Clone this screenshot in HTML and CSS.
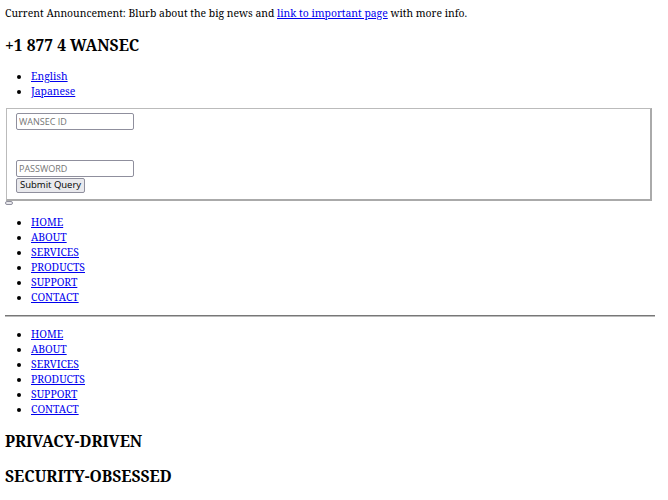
FILE: index.html
```html
<!DOCTYPE html>
<html>
<head>
<meta charset="utf-8">
<link rel="stylesheet" href="styles.css">
</head>
<body>
<p class="announce">Current Announcement: Blurb about the big news and <a href="#">link to important page</a> with more info.</p>
<h2 class="title">+1 877 4 WANSEC</h2>
<ul class="list list-lang">
  <li><a href="#">English</a></li>
  <li><a href="#">Japanese</a></li>
</ul>
<form class="login">
  <fieldset class="box">
    <input class="field" type="text" placeholder="WANSEC ID">
    <div class="spacer"></div>
    <input class="field" type="password" placeholder="PASSWORD">
    <button class="submit" type="button">Submit Query</button>
  </fieldset>
</form>
<button class="toggle" type="button"></button>
<ul class="list list-nav">
  <li><a href="#">HOME</a></li>
  <li><a href="#">ABOUT</a></li>
  <li><a href="#">SERVICES</a></li>
  <li><a href="#">PRODUCTS</a></li>
  <li><a href="#">SUPPORT</a></li>
  <li><a href="#">CONTACT</a></li>
</ul>
<hr class="rule">
<ul class="list list-nav2">
  <li><a href="#">HOME</a></li>
  <li><a href="#">ABOUT</a></li>
  <li><a href="#">SERVICES</a></li>
  <li><a href="#">PRODUCTS</a></li>
  <li><a href="#">SUPPORT</a></li>
  <li><a href="#">CONTACT</a></li>
</ul>
<h2 class="title title-first">PRIVACY-DRIVEN</h2>
<h2 class="title">SECURITY-OBSESSED</h2>
</body>
</html>
```
FILE: styles.css
```css
html, body {
  margin: 0;
  padding: 0;
  background: #fff;
}
body {
  margin: 0 13px 0 5px;
  font-family: "Noto Serif", "DejaVu Serif", serif;
  font-size: 10.4px;
  line-height: 15px;
  color: #000;
}
a { color: #0000ee; }
.announce {
  margin: 5.5px 0 0;
}
.title {
  font-size: 15.6px;
  line-height: 22px;
  margin: 13px 0;
  font-weight: bold;
}
.list {
  margin: 12.5px 0 9px;
  padding-left: 26px;
}
.list-nav { margin: 10px 0 10px; }
.list-nav2 { margin: 10px 0 0; }
.title-first { margin-top: 13.5px; }
.login { margin: 0; }
.box {
  margin: 0 3px 0 1px;
  padding: 4px 9px 6px;
  border-style: solid;
  border-width: 1px 2px 2px 1px;
  border-color: #bbb #aaa #aaa #bbb;
}
.field {
  display: block;
  width: 118px;
  height: 17px;
  box-sizing: border-box;
  font-family: "Open Sans", sans-serif;
  font-size: 9px;
  padding: 1px 2px;
  border: 1px solid #8f8f9d;
  border-radius: 2px;
  margin: 0;
}
.field::placeholder { color: #757575; }
.spacer { height: 30px; }
.submit {
  display: block;
  margin: 1px 0 0;
  height: 15px;
  font-family: "Open Sans", sans-serif;
  font-size: 9.5px;
  line-height: 12px;
  padding: 0 3px;
  border: 1px solid #8f8f9d;
  border-radius: 2px;
  background: #e9e9ed;
  color: #000;
}
.toggle {
  display: block;
  width: 8px;
  height: 4px;
  padding: 0;
  border: 1px solid #8f8f9d;
  border-radius: 2px;
  background: #e9e9ed;
  margin: 0;
}
.rule {
  margin: 10px 0 10px;
  height: 0;
  border: 0;
  border-top: 1px solid #777;
  border-bottom: 1px solid #bbb;
}
```
